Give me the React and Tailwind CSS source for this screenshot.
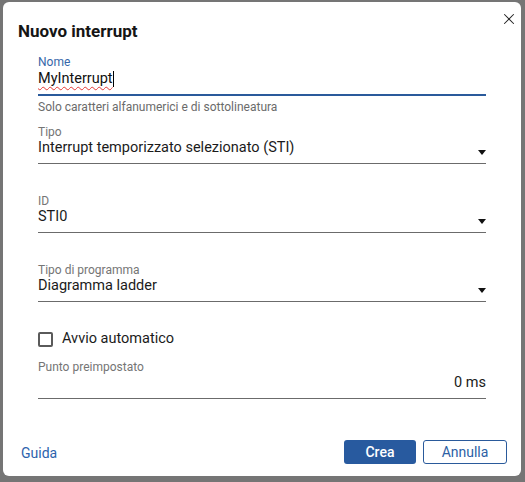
import { X } from 'lucide-react'

function Caret() {
  return (
    <svg width="8" height="5" viewBox="0 0 8 5" className="shrink-0 mb-[2px]">
      <path d="M0 0 H8 L4 5 Z" fill="#111" />
    </svg>
  )
}

function SelectField({ label, value, mt }) {
  return (
    <div className={mt}>
      <div className="text-[12px] leading-[14px] text-[#757575]">{label}</div>
      <div className="flex items-end justify-between pb-[6px] border-b border-[#6b6b6b]">
        <span className="text-[14.5px] leading-[18px] text-[#1b1b1b]">{value}</span>
        <Caret />
      </div>
    </div>
  )
}

export default function App() {
  return (
    <div className="w-[525px] h-[482px] bg-[#757575] pt-[2px] pl-[3px] overflow-hidden" style={{ fontFamily: 'Roboto, "Noto Sans", sans-serif' }}>
      <div className="relative w-[518px] h-[474px] bg-white rounded-[6px] flex flex-col">
        {/* Header */}
        <button className="absolute top-[8px] right-[3px] w-[18px] h-[18px] flex items-center justify-center text-[#222]">
          <X size={18} strokeWidth={1.4} />
        </button>
        <h2 className="pt-[19px] pl-[15px] text-[17px] leading-[20px] font-bold text-[#151515]">
          Nuovo interrupt
        </h2>

        {/* Form */}
        <div className="pl-[35px] w-[483px] flex flex-col">
          <div className="mt-[14px]">
            <div className="text-[12px] leading-[14px] text-[#3767a9]">Nome</div>
            <div className="pb-[5px] border-b-2 border-[#2a5a9b]">
              <div className="h-[20px] flex items-center">
                <span className="text-[14.5px] leading-[20px] text-[#111] underline decoration-wavy decoration-[#e53935] decoration-1 underline-offset-[3px]">
                  MyInterrupt
                </span>
                <span className="w-px h-[16px] bg-black" />
              </div>
            </div>
            <div className="mt-[4px] text-[12px] leading-[14px] text-[#6b6b6b]">
              Solo caratteri alfanumerici e di sottolineatura
            </div>
          </div>

          <SelectField mt="mt-[11px]" label="Tipo" value="Interrupt temporizzato selezionato (STI)" />
          <SelectField mt="mt-[30px]" label="ID" value="STI0" />
          <SelectField mt="mt-[30px]" label="Tipo di programma" value="Diagramma ladder" />

          <label className="mt-[28px] flex items-center gap-[9px] h-[18px]">
            <span className="w-[15px] h-[15px] border-2 border-[#5a5a5a] rounded-[2px] shrink-0" />
            <span className="text-[14.5px] leading-[18px] text-[#1b1b1b]">Avvio automatico</span>
          </label>

          <div className="mt-[12px]">
            <div className="text-[12px] leading-[14px] text-[#757575]">Punto preimpostato</div>
            <div className="pb-[6px] border-b border-[#6b6b6b] text-right text-[14.5px] leading-[18px] text-[#1b1b1b]">
              0 ms
            </div>
          </div>
        </div>

        {/* Footer */}
        <div className="mt-auto pb-[12px] pl-[18px] pr-[14px] flex items-center justify-between">
          <a className="text-[14px] leading-[18px] text-[#2d63ad] mt-[2px]">Guida</a>
          <div className="flex gap-[7px]">
            <button className="w-[72px] h-[24px] rounded-[3px] bg-[#285a9f] text-white text-[14px] font-medium">
              Crea
            </button>
            <button className="w-[84px] h-[24px] rounded-[3px] border border-[#2a5a9b] bg-white text-[#2d5fa5] text-[14px]">
              Annulla
            </button>
          </div>
        </div>
      </div>
    </div>
  )
}
